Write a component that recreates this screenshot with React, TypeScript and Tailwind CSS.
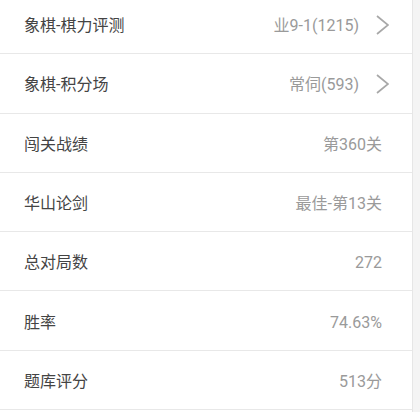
import React from "react"

const rows = [
  { label: "象棋-棋力评测", value: "业9-1(1215)", arrow: true },
  { label: "象棋-积分场", value: "常伺(593)", arrow: true },
  { label: "闯关战绩", value: "第360关" },
  { label: "华山论剑", value: "最佳-第13关" },
  { label: "总对局数", value: "272" },
  { label: "胜率", value: "74.63%" },
  { label: "题库评分", value: "513分" },
]

function Chevron() {
  return (
    <svg width="13" height="20" viewBox="0 0 13 20" className="ml-[17px] -mr-[7px] mt-[-2px]">
      <path d="M1 1 L12 10 L1 19" fill="none" stroke="#a8a8a8" strokeWidth="1.7" />
    </svg>
  )
}

export default function App() {
  return (
    <div
      className="w-[420px] h-[412px] overflow-hidden bg-[#f4f4f4] flex"
      style={{ fontFamily: '"Roboto", "Noto Sans CJK SC", sans-serif' }}
    >
      <div className="w-[413px] bg-white border-r border-[#e6e6e6] -mt-[5px]">
        {rows.map((r) => (
          <div
            key={r.label}
            className="h-[59.3px] flex items-center border-b border-[#e8e8e8] pl-[24px] pr-[30px] pt-[4px]"
          >
            <span className="text-[16px] text-[#444444] flex-1">{r.label}</span>
            <span className="text-[16px] text-[#9a9a9a]">{r.value}</span>
            {r.arrow && <Chevron />}
          </div>
        ))}
      </div>
    </div>
  )
}
